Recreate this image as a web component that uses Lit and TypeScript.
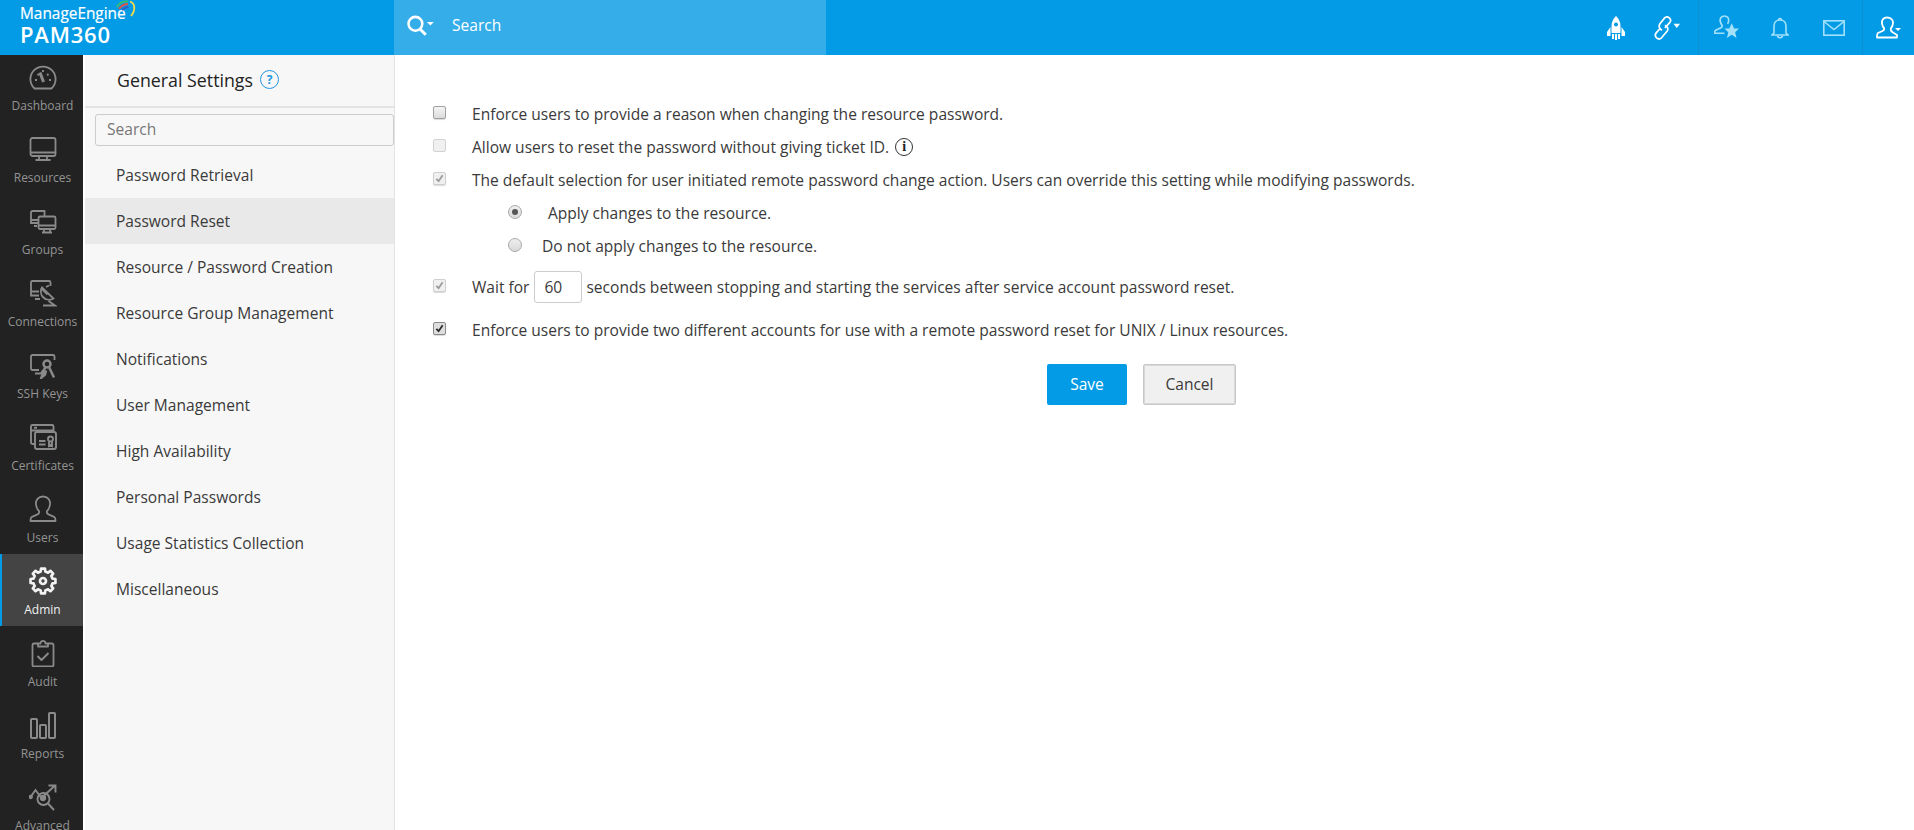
import { LitElement, html, css, nothing } from "lit";
import { customElement } from "lit/decorators.js";

function gear(cx: number, cy: number, ro: number, ri: number, teeth: number): string {
  const pts: string[] = [];
  const step = (Math.PI * 2) / teeth;
  for (let i = 0; i < teeth; i++) {
    const a = i * step - Math.PI / 2;
    const w = step * 0.2;
    const p = (r: number, t: number) =>
      `${(cx + r * Math.cos(t)).toFixed(2)} ${(cy + r * Math.sin(t)).toFixed(2)}`;
    pts.push(p(ri, a - step * 0.3), p(ro, a - w), p(ro, a + w), p(ri, a + step * 0.3));
  }
  return "M" + pts.join("L") + "Z";
}

const navItems = [
  { label: "Dashboard", icon: html`<svg class="nav-svg" viewBox="0 0 28 28" fill="none" stroke="currentColor" stroke-width="1.8"><path d="M5.500 25.500A12.600 12.600 0 1 1 22.500 25.500Z" stroke-linejoin="round"/><path d="M11 9.500L14.500 19" stroke-width="3"/><path d="M14 7v2M6 17h2M20 17h2M8.500 11l1.400 1.400M19.500 11l-1.400 1.400"/></svg>` },
  { label: "Resources", icon: html`<svg class="nav-svg" viewBox="0 0 28 28" fill="none" stroke="currentColor" stroke-width="1.8"><rect x="1.500" y="3" width="25" height="18" rx="2"/><path d="M1.500 17.500h25M10 21v3.500M18 21v3.500M6.500 25h15"/></svg>` },
  { label: "Groups", icon: html`<svg class="nav-svg" viewBox="0 0 28 28" fill="none" stroke="currentColor" stroke-width="1.8"><path d="M9 16H2V5.500A1.500 1.500 0 0 1 3.500 4H15.500V9"/><path d="M2 13h7M5 19h3"/><rect x="9.500" y="9.500" width="17" height="12.500" rx="1.500"/><path d="M9.500 18.500h17M15 22v3M21 22v3M13 25.500h10"/></svg>` },
  { label: "Connections", icon: html`<svg class="nav-svg" viewBox="0 0 28 28" fill="none" stroke="currentColor" stroke-width="1.8"><path d="M10 16.500H2V3.500A1.500 1.500 0 0 1 3.500 2H20A1.500 1.500 0 0 1 21.500 3.500V7"/><path d="M2 12.500h8M6 20h5"/><path d="M13 8.500L24.500 19.500A8.200 8.200 0 0 1 13 8.500Z"/><path d="M12 9l6.500 6.500M17 8l3-1.500M19.500 22l6.500 4.500H14"/></svg>` },
  { label: "SSH Keys", icon: html`<svg class="nav-svg" viewBox="0 0 28 28" fill="none" stroke="currentColor" stroke-width="1.8"><path d="M10 19H3.500A1.500 1.500 0 0 1 2 17.500V5.500A1.500 1.500 0 0 1 3.500 4H24A1.500 1.500 0 0 1 25.500 5.500V9"/><path d="M6 22.500h6l2-3.500"/><circle cx="18" cy="13" r="3.500" stroke-width="2.500"/><path d="M16 16.500l-3.500 10 3.500-3 1-4M20 16l5 10.500" stroke-width="2.500"/></svg>` },
  { label: "Certificates", icon: html`<svg class="nav-svg" viewBox="0 0 28 28" fill="none" stroke="currentColor" stroke-width="1.900"><path d="M6 21H3.500A1.500 1.500 0 0 1 2 19.500V3.500A1.500 1.500 0 0 1 3.500 2H23A1.500 1.500 0 0 1 24.500 3.500V8"/><path d="M2 7.500H24M5 4.800h3" /><rect x="6" y="9" width="21" height="17" rx="2"/><path d="M10 18h6.500M10 21.500h6.500"/><circle cx="21.500" cy="16" r="2.500"/><path d="M20 19v4l1.500-1 1.500 1v-4"/></svg>` },
  { label: "Users", icon: html`<svg class="nav-svg" viewBox="0 0 28 28" fill="none" stroke="currentColor" stroke-width="1.800" stroke-linejoin="round"><path d="M14 1.500c-4.800 0-7.500 3.500-7 8 .4 3 1.300 5 3 6.500.6 1.800-.3 3-2 3.700l-5 2.100c-1 .5-1.500 1.500-1.500 4.200h25c0-2.700-.5-3.700-1.500-4.200l-5-2.100c-1.700-.7-2.600-1.900-2-3.700 1.700-1.500 2.600-3.500 3-6.500 .5-4.500-2.200-8-7-8Z"/></svg>` },
  { label: "Admin", active: true, icon: html`<svg class="nav-svg" viewBox="0 0 28 28" fill="none" stroke="currentColor" stroke-width="2.700" stroke-linejoin="round"><path d="${gear(14, 14, 12.6, 9.8, 8)}"/><circle cx="14" cy="14" r="3"/></svg>` },
  { label: "Audit", icon: html`<svg class="nav-svg" viewBox="0 0 28 28" fill="none" stroke="currentColor" stroke-width="1.800" stroke-linejoin="round"><path d="M9 4.500H5A1.500 1.500 0 0 0 3.500 6v20A1.500 1.500 0 0 0 5 27.500H23A1.500 1.500 0 0 0 24.500 26V6A1.500 1.500 0 0 0 23 4.500H19"/><path d="M9 7.500V4.500H11.500C11.500 1 16.500 1 16.500 4.500H19V7.500Z"/><path d="M8.500 17l4 4 7-7" stroke-width="2"/></svg>` },
  { label: "Reports", icon: html`<svg class="nav-svg" viewBox="0 0 28 28" fill="none" stroke="currentColor" stroke-width="2"><rect x="2" y="8" width="6" height="19" rx=".8"/><rect x="11" y="14" width="6" height="13" rx=".8"/><rect x="20" y="2" width="6" height="25" rx=".8"/></svg>` },
  { label: "Advanced", icon: html`<svg class="nav-svg" viewBox="0 0 28 28" fill="none" stroke="currentColor" stroke-width="1.900"><circle cx="14.500" cy="16" r="6"/><path d="M19 20.500l6 6.500M1.500 14l5-7 6 8 13-12M19.500 2.500h7v7"/><circle cx="1.800" cy="14" r="1.200" fill="currentColor"/><circle cx="14" cy="15" r="2.200" fill="currentColor"/></svg>` },
];

const settings = [
  "Password Retrieval", "Password Reset", "Resource / Password Creation", "Resource Group Management",
  "Notifications", "User Management", "High Availability", "Personal Passwords",
  "Usage Statistics Collection", "Miscellaneous",
];

type BoxKind = "off" | "disabled" | "checked-disabled" | "checked";

@customElement("app-root")
export class AppRoot extends LitElement {
  static styles = css`
    :host { display: flex; flex-direction: column; height: 100vh; overflow: hidden; background: #fff;
      font-family: "Open Sans", "Noto Sans", sans-serif; font-size: 15.55px; color: #333; }
    .top { height: 55px; flex: none; background: #039be5; display: flex; color: #fff; }
    .brand { width: 394px; flex: none; box-sizing: border-box; padding: 5px 0 0 20px; position: relative; }
    .me { font-size: 15.4px; font-weight: 400; line-height: 17px; -webkit-text-stroke: .2px #fff; }
    .pam { font-size: 22px; font-weight: 600; line-height: 25px; letter-spacing: .8px; }
    .arc { position: absolute; left: 116px; top: 0; width: 20px; height: 18px; }
    .tsearch { width: 432px; flex: none; background: #35ade9; display: flex; align-items: center; padding: 0 0 5px 11px; box-sizing: border-box; }
    .tsearch svg { width: 30px; height: 23px; margin-right: 17px; }
    .tools { flex: 1; display: flex; justify-content: flex-end; }
    .tgroup { display: flex; align-items: center; }
    .tgroup + .tgroup { border-left: 1px solid #0d8fd0; }
    .tool { display: flex; justify-content: center; align-items: center; height: 55px; }
    .tool svg { display: block; }
    .g1 { width: 128px; justify-content: flex-end; }
    .g1 .t-rocket { width: 36px; margin-right: 13px; }
    .g1 .t-link { width: 40px; margin-right: 11px; }
    .g2 { width: 163px; }
    .g2 .tool { width: 54px; }
    .g3 { width: 51px; }
    .g3 .tool { width: 51px; }
    .t-light { color: #a3e1fb; }

    .body { flex: 1; display: flex; min-height: 0; }
    .rail { width: 83px; flex: none; background: #222; margin-right: 2px; overflow: hidden; }
    .nav { height: 72px; box-sizing: border-box; padding: 13px 0 0 2px; display: flex; flex-direction: column; align-items: center; color: #8a8a8a; }
    .nav.first { height: 67px; padding-top: 8px; }
    .nav .lbl { font-size: 12px; line-height: 16px; margin-top: 7px; color: #949494; white-space: nowrap; }
    .nav.on { background: #444; color: #f2f2f2; box-shadow: inset 2px 0 0 #039be5; }
    .nav.on .lbl { color: #f2f2f2; }
    .nav-svg { width: 28px; height: 28px; display: block; flex: none; }

    .panel { width: 310px; flex: none; box-sizing: border-box; background: #f7f7f7; border-right: 1px solid #e3e3e3; }
    .phead { height: 53px; box-sizing: border-box; border-bottom: 2px solid #e4e4e4; display: flex; align-items: center; padding: 0 0 2px 32px; gap: 7px; }
    .ptitle { font-size: 17.8px; color: #222; line-height: 24px; }
    .help { border: 1.500px solid #2496e0; border-radius: 50%; color: #2496e0; font-size: 12px; font-weight: 700; display: flex; align-items: center; justify-content: center; width: 17px; height: 17px; }
    .psearch { margin: 6px 0 6px 10px; height: 32px; box-sizing: border-box; border: 1px solid #ccc; border-radius: 3px; padding: 0 0 3px 11px; display: flex; align-items: center; color: #777; background: #f7f7f7; }
    .mi { height: 46px; box-sizing: border-box; padding-left: 31px; display: flex; align-items: center; color: #3a3a3a; }
    .mi.sel { background: #e9e9e9; }

    main { flex: 1; min-width: 0; padding: 43px 0 0 38px; }
    .row { height: 33px; box-sizing: border-box; padding-bottom: 1px; display: flex; align-items: center; white-space: nowrap; color: #3a3a3a; }
    .row.sub { padding-left: 75px; }
    .row.wait { height: 48px; }
    .row.last { height: 38px; }
    .slot { width: 39px; flex: none; display: flex; }
    .box { width: 13px; height: 13px; box-sizing: border-box; border: 1px solid #a0a0a0; border-radius: 2px; background: linear-gradient(#f4f4f4, #dcdcdc); box-shadow: 0 1px 1px rgba(0,0,0,.15); display: flex; align-items: center; justify-content: center; margin-top: -3px; }
    .box.disabled { border-color: #d2d2d2; background: #f0f0f0; box-shadow: none; }
    .box.checked-disabled { border-color: #cfcfcf; background: #f0f0f0; color: #9a9a9a; }
    .box.checked { color: #2a2a2a; background: #dedede; border-color: #8a8a8a; }
    .box svg { width: 9px; height: 9px; }
    .radio { width: 14px; height: 14px; box-sizing: border-box; border-radius: 50%; border: 1px solid #a8a8a8; background: linear-gradient(#efefef, #d9d9d9); display: flex; align-items: center; justify-content: center; margin-top: -3px; flex: none; }
    .radio i { width: 6px; height: 6px; border-radius: 50%; background: #555; display: block; }
    .r1 { margin-left: 26px; }
    .r2 { margin-left: 20px; }
    .info { width: 18px; height: 18px; box-sizing: border-box; border: 1.500px solid #333; border-radius: 50%; margin-left: 6px; display: flex; align-items: center; justify-content: center; font-family: "Liberation Serif", serif; font-weight: 700; font-size: 14px; color: #222; }
    .num { width: 48px; height: 32px; box-sizing: border-box; border: 1px solid #ccc; border-radius: 3px; margin: 0 4px 0 5px; padding-left: 9px; display: flex; align-items: center; }
    .btns { display: flex; gap: 16px; margin: 15px 0 0 614px; }
    .btn { height: 41px; box-sizing: border-box; padding-bottom: 2px; display: flex; align-items: center; justify-content: center; border-radius: 2px; }
    .save { width: 80px; background: #039be5; color: #fff; }
    .cancel { width: 93px; background: #f0f0f0; border: 1px solid #c8c8c8; box-shadow: inset 0 0 0 1px #d8d8d8; color: #3a3a3a; }
  `;

  private box(kind: BoxKind) {
    const checked = kind === "checked" || kind === "checked-disabled";
    return html`<span class="slot"><span class="box ${kind}">${checked
      ? html`<svg viewBox="0 0 10 10" fill="none" stroke="currentColor" stroke-width="2"><path d="M1.500 5.500l2.500 2.500 4.500-6.500"/></svg>`
      : nothing}</span></span>`;
  }

  render() {
    return html`
      <header class="top">
        <div class="brand">
          <div class="me">ManageEngine</div>
          <div class="pam">PAM360</div>
          <svg class="arc" viewBox="0 0 20 18" fill="none" stroke-width="1.800">
            <path d="M1 7C3 3 7 1 12 1.500" stroke="#35c26a"/><path d="M3 9C5 6 8 4 12 4" stroke="#e2504a"/>
            <path d="M14 1.500C19 3 20 10 15 16" stroke="#f7dc4a"/><path d="M6 10C8 8 10 7 12.500 7" stroke="#2f5fc4"/>
          </svg>
        </div>
        <div class="tsearch">
          <svg viewBox="0 0 26 20" fill="none" stroke="#fff" stroke-width="2.200"><circle cx="9" cy="8.500" r="6"/><path d="M13 13l5 5" stroke-width="2.600"/><path d="M19 7h6l-3 3z" fill="#fff" stroke="none"/></svg>
          <span>Search</span>
        </div>
        <div class="tools">
          <div class="tgroup g1">
            <div class="tool t-rocket"><svg width="18" height="24" viewBox="0 0 18 24" fill="#fff"><path d="M9 0C6 3 4.500 6 4.500 10v7h9v-7C13.500 6 12 3 9 0Z"/><circle cx="9" cy="8.500" r="2" fill="#039be5"/><path d="M3.500 11L0 16v4h3.500zM14.500 11L18 16v4h-3.500zM5 18h2v5H5zM8 18h2v6H8zM11 18h2v5h-2z"/></svg></div>
            <div class="tool t-link"><svg width="30" height="26" viewBox="0 0 26 24" fill="none" stroke="#fff" stroke-width="1.600"><path d="M7 12L3 16.500C.5 20 5 24 8 21l5-6c2-3-.5-5-2-5.500"/><path d="M11 12L15.500 7C18 4 14 .5 11 2.500L6.500 8C4.500 11 7 13.500 8.500 14"/><path d="M19 9h6l-3 4z" fill="#fff" stroke="none" transform="translate(0 -1)"/></svg></div>
          </div>
          <div class="tgroup g2 t-light">
            <div class="tool"><svg width="25" height="25" viewBox="0 0 24 24" fill="none" stroke="currentColor" stroke-width="1.600"><path d="M10 1C7 1 5.500 3 6 6c.3 2 1 3 1.800 4 .3 1.500-.3 2-1.500 2.500L2 14.500c-1 .5-1.500 1-1.500 3H10"/><path d="M10 1c3 0 4.500 2 4 5-.2 1-.5 2-1 2.500"/><path d="M17 8l2.300 5H24l-3.700 3.500 1.300 5.500L17 19l-4.600 3 1.300-5.500L10 13h4.700z" fill="currentColor" stroke="none"/></svg></div>
            <div class="tool"><svg width="18" height="22" viewBox="0 0 18 22" fill="none" stroke="currentColor" stroke-width="1.600"><path d="M3 16V9C3 5.500 5.500 3 9 3s6 2.500 6 6v7l2 2H1z"/><path d="M7.500 3c0-2 3-2 3 0M6.500 18.500c0 3 5 3 5 0"/></svg></div>
            <div class="tool"><svg width="22" height="16" viewBox="0 0 22 16" fill="none" stroke="currentColor" stroke-width="1.600"><rect x=".8" y=".8" width="20.400" height="14.400"/><path d="M1 1.500l10 8 10-8"/></svg></div>
          </div>
          <div class="tgroup g3">
            <div class="tool"><svg width="26" height="24" viewBox="0 0 26 24" fill="none" stroke="#fff" stroke-width="1.800" stroke-linejoin="round"><path d="M11 1.500C7.500 1.500 5.500 4 6 7.500c.3 2 1 3.500 2 4.500.4 1.500-.3 2.500-1.500 3L2 17c-1 .5-1 1.500-1 4.500h20V19l-4-2.500c-2-1-2.700-2.500-2-4.500 1-1 1.700-2.500 2-4.500C17.500 4 14.500 1.500 11 1.500Z"/><path d="M19 12h6l-3 3z" fill="#fff" stroke="none"/></svg></div>
          </div>
        </div>
      </header>
      <div class="body">
        <nav class="rail">
          ${navItems.map((n, i) => html`<div class="nav ${i === 0 ? "first" : ""} ${n.active ? "on" : ""}">${n.icon}<span class="lbl">${n.label}</span></div>`)}
        </nav>
        <aside class="panel">
          <div class="phead"><span class="ptitle">General Settings</span><span class="help">?</span></div>
          <div class="psearch">Search</div>
          ${settings.map((s, i) => html`<div class="mi ${i === 1 ? "sel" : ""}">${s}</div>`)}
        </aside>
        <main>
          <div class="row">${this.box("off")}Enforce users to provide a reason when changing the resource password.</div>
          <div class="row">${this.box("disabled")}Allow users to reset the password without giving ticket ID.<span class="info">i</span></div>
          <div class="row">${this.box("checked-disabled")}The default selection for user initiated remote password change action. Users can override this setting while modifying passwords.</div>
          <div class="row sub"><span class="radio"><i></i></span><span class="r1">Apply changes to the resource.</span></div>
          <div class="row sub"><span class="radio"></span><span class="r2">Do not apply changes to the resource.</span></div>
          <div class="row wait">${this.box("checked-disabled")}Wait for<span class="num">60</span>seconds between stopping and starting the services after service account password reset.</div>
          <div class="row last">${this.box("checked")}Enforce users to provide two different accounts for use with a remote password reset for UNIX / Linux resources.</div>
          <div class="btns"><div class="btn save">Save</div><div class="btn cancel">Cancel</div></div>
        </main>
      </div>
    `;
  }
}
